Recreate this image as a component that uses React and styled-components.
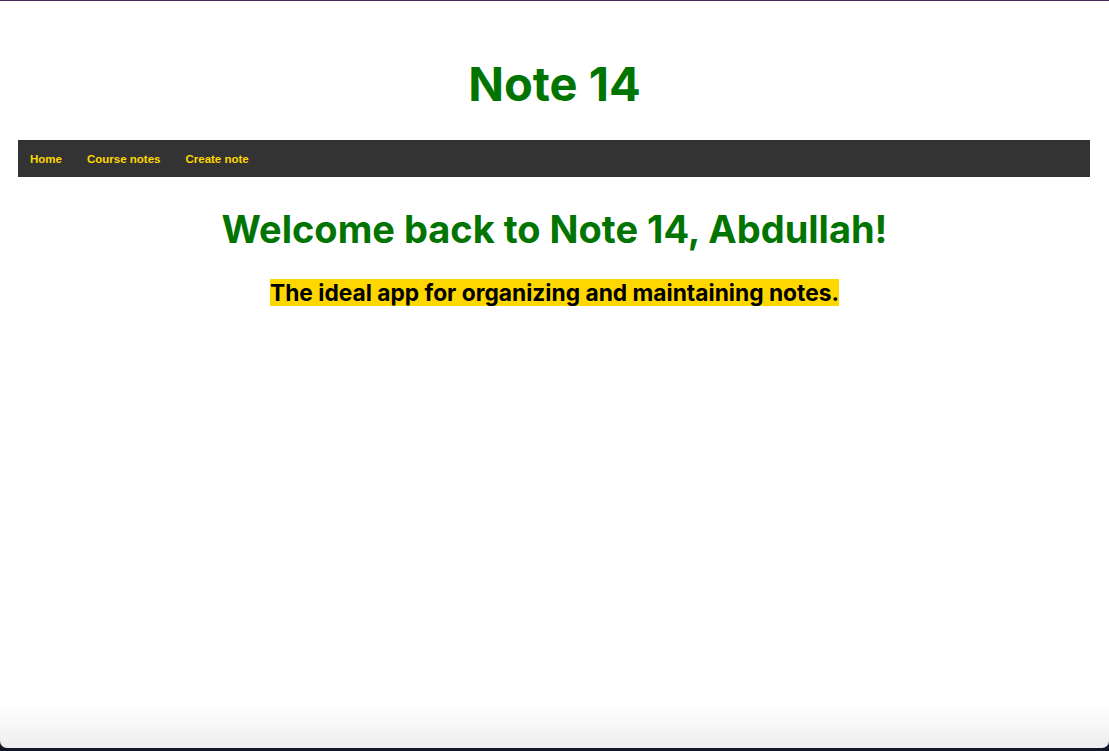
import React from "react";
import styled, { createGlobalStyle } from "styled-components";

const Global = createGlobalStyle`
  html, body { margin: 0; padding: 0; }
  body { background: #121626; font-family: Inter, "Noto Sans", sans-serif; }
`;

const Window = styled.div`
  height: 748px;
  box-sizing: border-box;
  border-top: 1px solid #45295a;
  border-radius: 0 0 7px 7px;
  background: linear-gradient(to bottom, #ffffff 0, #ffffff 700px, #f8f8f8 722px, #ededed 748px);
  display: flex;
  flex-direction: column;
`;

const Title = styled.h1`
  margin: 54px 0 0;
  text-align: center;
  font-family: Inter, sans-serif;
  font-weight: 700;
  font-size: 47px;
  line-height: 57px;
  color: #027402;
`;

const Nav = styled.nav`
  margin: 28px 19px 0 18px;
  height: 37px;
  background: #333333;
  display: flex;
  align-items: center;
  padding-left: 12px;
  gap: 25px;
`;

const NavLink = styled.a`
  color: #ffd700;
  font-family: "Liberation Sans", Arial, sans-serif;
  font-weight: 700;
  font-size: 11.5px;
  text-decoration: none;
  cursor: pointer;
`;

const Welcome = styled.h2`
  margin: 29px 0 0;
  text-align: center;
  font-family: Inter, sans-serif;
  font-weight: 700;
  font-size: 38px;
  line-height: 47px;
  color: #027402;
`;

const Tagline = styled.p`
  margin: 26px 0 0;
  text-align: center;
  font-family: Inter, sans-serif;
  font-weight: 700;
  font-size: 22.75px;
  line-height: 27px;
`;

const Mark = styled.span`
  background: #ffd700;
  color: #000;
`;

export default function App() {
  return (
    <>
      <Global />
      <Window>
        <Title>Note 14</Title>
        <Nav>
          <NavLink>Home</NavLink>
          <NavLink>Course notes</NavLink>
          <NavLink>Create note</NavLink>
        </Nav>
        <Welcome>Welcome back to Note 14, Abdullah!</Welcome>
        <Tagline>
          <Mark>The ideal app for organizing and maintaining notes.</Mark>
        </Tagline>
      </Window>
    </>
  );
}
